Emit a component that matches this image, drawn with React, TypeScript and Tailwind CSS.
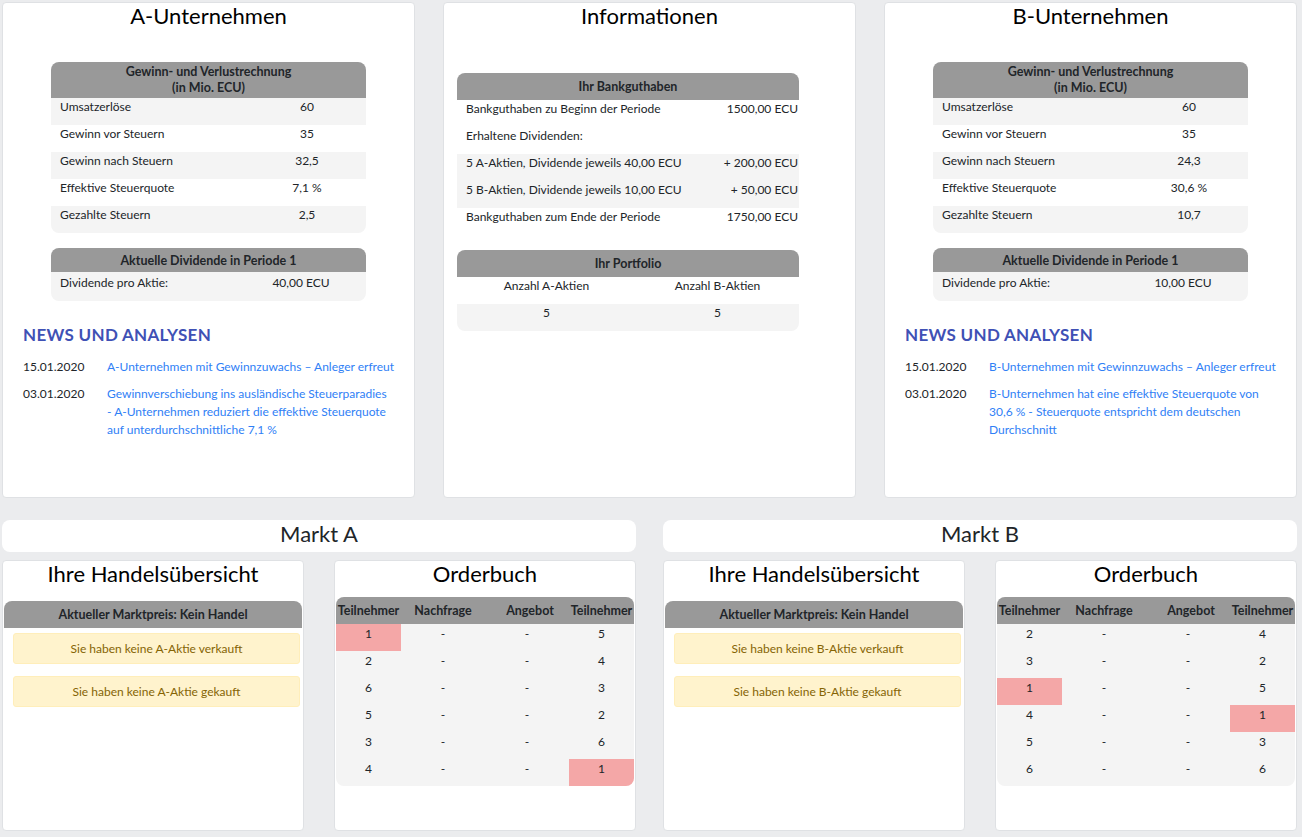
import React from 'react';

const GRAY_HEAD = 'bg-[#999999]';

type Row = [string, string];
type OrderRow = { l: string; r: string; hl?: 'l' | 'r' };

function Card({ title, className = '', children }: { title: string; className?: string; children?: React.ReactNode }) {
  return (
    <div className={`bg-white border border-[#dfe1e4] rounded-[4px] ${className}`}>
      <h2 className="text-center text-[22px] leading-[30px] -mt-[2px] text-black">{title}</h2>
      {children}
    </div>
  );
}

function GuvTable({ rows }: { rows: Row[] }) {
  return (
    <div className="w-[315px] mx-auto rounded-lg overflow-hidden">
      <div className={`${GRAY_HEAD} h-[36px] pt-[2px] text-center font-bold text-[12.5px] leading-[16px]`}>
        Gewinn- und Verlustrechnung
        <br />
        (in Mio. ECU)
      </div>
      {rows.map((r, i) => (
        <div key={r[0]} className={`flex h-[27px] leading-[18px] ${i % 2 === 0 ? 'bg-[#f4f4f4]' : 'bg-white'}`}>
          <span className="w-[197px] pl-[9px]">{r[0]}</span>
          <span className="flex-1 text-center">{r[1]}</span>
        </div>
      ))}
    </div>
  );
}

function DividendTable({ value }: { value: string }) {
  return (
    <div className="w-[315px] mx-auto mt-[15px] rounded-lg overflow-hidden bg-[#f4f4f4]">
      <div className={`${GRAY_HEAD} h-[24px] leading-[24px] pt-[1px] text-center font-bold text-[12.5px]`}>
        Aktuelle Dividende in Periode 1
      </div>
      <div className="flex h-[29px] pt-[2px] leading-[18px]">
        <span className="w-[185px] pl-[9px]">Dividende pro Aktie:</span>
        <span className="flex-1 text-center">{value}</span>
      </div>
    </div>
  );
}

function News({ items }: { items: { date: string; lines: string[] }[] }) {
  return (
    <div className="px-[20px] mt-[23px]">
      <h3 className="text-[#3f51b5] font-bold text-[17px] leading-[22px] tracking-[0.3px]">NEWS UND ANALYSEN</h3>
      <div className="mt-[12px] flex flex-col gap-[9px]">
        {items.map((it) => (
          <div key={it.date} className="flex leading-[18px]">
            <span className="w-[84px] shrink-0">{it.date}</span>
            <span className="text-[#2f80f6] whitespace-nowrap">
              {it.lines.map((l, i) => (
                <React.Fragment key={i}>
                  {i > 0 && <br />}
                  {l}
                </React.Fragment>
              ))}
            </span>
          </div>
        ))}
      </div>
    </div>
  );
}

function CompanyCard({
  title,
  rows,
  dividend,
  news,
}: {
  title: string;
  rows: Row[];
  dividend: string;
  news: { date: string; lines: string[] }[];
}) {
  return (
    <Card title={title} className="w-[413px] h-[496px]">
      <div className="mt-[31px]">
        <GuvTable rows={rows} />
        <DividendTable value={dividend} />
      </div>
      <News items={news} />
    </Card>
  );
}

function InfoCard() {
  const bank: { label: string; value: string; gray: boolean }[] = [
    { label: 'Bankguthaben zu Beginn der Periode', value: '1500,00 ECU', gray: false },
    { label: 'Erhaltene Dividenden:', value: '', gray: false },
    { label: '5 A-Aktien, Dividende jeweils 40,00 ECU', value: '+ 200,00 ECU', gray: true },
    { label: '5 B-Aktien, Dividende jeweils 10,00 ECU', value: '+ 50,00 ECU', gray: true },
    { label: 'Bankguthaben zum Ende der Periode', value: '1750,00 ECU', gray: false },
  ];
  return (
    <Card title="Informationen" className="w-[413px] h-[496px]">
      <div className="ml-[13px] w-[342px] mt-[42px]">
        <div className="rounded-t-lg overflow-hidden">
          <div className={`${GRAY_HEAD} h-[27px] leading-[27px] text-center font-bold text-[12.5px]`}>Ihr Bankguthaben</div>
          {bank.map((b) => (
            <div key={b.label} className={`flex justify-between h-[27px] leading-[18px] pl-[9px] pr-[1px] ${b.gray ? 'bg-[#f4f4f4]' : 'bg-white'}`}>
              <span>{b.label}</span>
              <span>{b.value}</span>
            </div>
          ))}
        </div>
        <div className="mt-[15px] rounded-lg overflow-hidden">
          <div className={`${GRAY_HEAD} h-[27px] leading-[27px] text-center font-bold text-[12.5px]`}>Ihr Portfolio</div>
          <div className="grid grid-cols-2 h-[27px] leading-[18px] text-center bg-white">
            <span className="pl-[8px]">Anzahl A-Aktien</span>
            <span className="pl-[8px]">Anzahl B-Aktien</span>
          </div>
          <div className="grid grid-cols-2 h-[27px] leading-[18px] text-center bg-[#f4f4f4]">
            <span className="pl-[8px]">5</span>
            <span className="pl-[8px]">5</span>
          </div>
        </div>
      </div>
    </Card>
  );
}

function TradeCard({ letter }: { letter: string }) {
  return (
    <Card title="Ihre Handelsübersicht" className="w-[302px] h-[271px]">
      <div className="mx-[1px] mt-[12px]">
        <div className={`${GRAY_HEAD} rounded-t-lg h-[27px] leading-[27px] text-center font-bold text-[12.5px]`}>
          Aktueller Marktpreis: Kein Handel
        </div>
        <div className="flex flex-col gap-[12px] mt-[5px] ml-[9px] mr-[2px]">
          <div className="h-[31px] leading-[29px] text-center bg-[#fff3cd] border border-[#ffeeba] rounded-[3px] text-[#856404]">
            Sie haben keine {letter}-Aktie verkauft
          </div>
          <div className="h-[31px] leading-[29px] text-center bg-[#fff3cd] border border-[#ffeeba] rounded-[3px] text-[#856404]">
            Sie haben keine {letter}-Aktie gekauft
          </div>
        </div>
      </div>
    </Card>
  );
}

function OrderCard({ rows }: { rows: OrderRow[] }) {
  return (
    <Card title="Orderbuch" className="w-[302px] h-[271px]">
      <div className="mx-[1px] mt-[8px] rounded-lg overflow-hidden bg-[#f4f4f4]">
        <div className={`${GRAY_HEAD} grid grid-cols-[65px_84px_84px_65px] h-[27px] leading-[27px] text-center font-bold text-[12.5px]`}>
          <span className="whitespace-nowrap">Teilnehmer</span>
          <span>Nachfrage</span>
          <span className="pl-[6px]">Angebot</span>
          <span className="whitespace-nowrap">Teilnehmer</span>
        </div>
        {rows.map((r, i) => (
          <div key={i} className="grid grid-cols-[65px_84px_84px_65px] h-[27px] leading-[19px] text-center">
            <span className={r.hl === 'l' ? 'bg-[#f4a7a7]' : ''}>{r.l}</span>
            <span>-</span>
            <span>-</span>
            <span className={r.hl === 'r' ? 'bg-[#f4a7a7]' : ''}>{r.r}</span>
          </div>
        ))}
      </div>
    </Card>
  );
}

function Market({ name, letter, rows }: { name: string; letter: string; rows: OrderRow[] }) {
  return (
    <div className="w-[634px]">
      <div className="bg-white rounded-lg h-[32px] text-center text-[22px] leading-[28px]">{name}</div>
      <div className="flex justify-between mt-[8px]">
        <TradeCard letter={letter} />
        <OrderCard rows={rows} />
      </div>
    </div>
  );
}

export default function App() {
  const guvA: Row[] = [
    ['Umsatzerlöse', '60'],
    ['Gewinn vor Steuern', '35'],
    ['Gewinn nach Steuern', '32,5'],
    ['Effektive Steuerquote', '7,1 %'],
    ['Gezahlte Steuern', '2,5'],
  ];
  const guvB: Row[] = [
    ['Umsatzerlöse', '60'],
    ['Gewinn vor Steuern', '35'],
    ['Gewinn nach Steuern', '24,3'],
    ['Effektive Steuerquote', '30,6 %'],
    ['Gezahlte Steuern', '10,7'],
  ];

  return (
    <div className="min-h-[837px] bg-[#ebecee] pl-[2px] pt-[2px] text-[12px] text-[#212529] font-['Lato',sans-serif]">
      <div className="flex gap-[28px]">
        <CompanyCard
          title="A-Unternehmen"
          rows={guvA}
          dividend="40,00 ECU"
          news={[
            { date: '15.01.2020', lines: ['A-Unternehmen mit Gewinnzuwachs – Anleger erfreut'] },
            {
              date: '03.01.2020',
              lines: [
                'Gewinnverschiebung ins ausländische Steuerparadies',
                '- A-Unternehmen reduziert die effektive Steuerquote',
                'auf unterdurchschnittliche 7,1 %',
              ],
            },
          ]}
        />
        <InfoCard />
        <CompanyCard
          title="B-Unternehmen"
          rows={guvB}
          dividend="10,00 ECU"
          news={[
            { date: '15.01.2020', lines: ['B-Unternehmen mit Gewinnzuwachs – Anleger erfreut'] },
            {
              date: '03.01.2020',
              lines: [
                'B-Unternehmen hat eine effektive Steuerquote von',
                '30,6 % - Steuerquote entspricht dem deutschen',
                'Durchschnitt',
              ],
            },
          ]}
        />
      </div>

      <div className="flex gap-[27px] mt-[22px]">
        <Market
          name="Markt A"
          letter="A"
          rows={[
            { l: '1', r: '5', hl: 'l' },
            { l: '2', r: '4' },
            { l: '6', r: '3' },
            { l: '5', r: '2' },
            { l: '3', r: '6' },
            { l: '4', r: '1', hl: 'r' },
          ]}
        />
        <Market
          name="Markt B"
          letter="B"
          rows={[
            { l: '2', r: '4' },
            { l: '3', r: '2' },
            { l: '1', r: '5', hl: 'l' },
            { l: '4', r: '1', hl: 'r' },
            { l: '5', r: '3' },
            { l: '6', r: '6' },
          ]}
        />
      </div>
    </div>
  );
}
